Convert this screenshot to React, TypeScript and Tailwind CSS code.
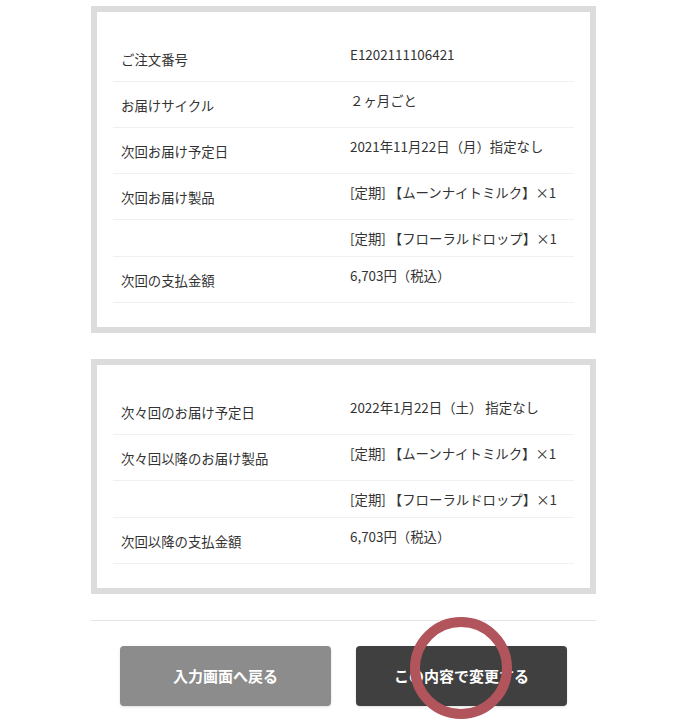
const font = { fontFamily: '"Noto Sans CJK JP", "Noto Sans", sans-serif' };

type Row = { label: string; value: string };

const current: Row[] = [
  { label: "ご注文番号", value: "E1202111106421" },
  { label: "お届けサイクル", value: "２ヶ月ごと" },
  { label: "次回お届け予定日", value: "2021年11月22日（月）指定なし" },
  { label: "次回お届け製品", value: "[定期] 【ムーンナイトミルク】×1" },
  { label: "", value: "[定期] 【フローラルドロップ】×1" },
  { label: "次回の支払金額", value: "6,703円（税込）" },
];

const following: Row[] = [
  { label: "次々回のお届け予定日", value: "2022年1月22日（土） 指定なし" },
  { label: "次々回以降のお届け製品", value: "[定期] 【ムーンナイトミルク】×1" },
  { label: "", value: "[定期] 【フローラルドロップ】×1" },
  { label: "次回以降の支払金額", value: "6,703円（税込）" },
];

function InfoBox({ rows }: { rows: Row[] }) {
  return (
    <div className="border-[6px] border-[#dcdcdc] bg-white px-[16px] py-[24px]">
      {rows.map((row, i) => (
        <div key={i} className="flex items-start border-b border-[#f0f0f0]">
          <div className="w-[237px] shrink-0 pl-2 pt-[15px] pb-[14px] text-[13.4px] leading-4 text-[#333]">
            {row.label}
          </div>
          <div className="pt-[10px] pb-[9px] text-[13.4px] leading-[17px] text-[#333]">
            {row.value}
          </div>
        </div>
      ))}
    </div>
  );
}

export default function App() {
  return (
    <div className="min-h-screen bg-white pt-[6px]" style={font}>
      <div className="ml-[91px] w-[505px]">
        <InfoBox rows={current} />
        <div className="mt-[26px]">
          <InfoBox rows={following} />
        </div>

        <div className="mt-[26px] border-t border-[#e5e5e5] pt-[25px]">
          <div className="relative flex justify-center gap-[25px]">
            <button className="h-[60px] w-[211px] rounded bg-[#8c8c8c] text-[15px] font-bold text-white shadow-sm">
              入力画面へ戻る
            </button>
            <button className="h-[60px] w-[211px] rounded bg-[#404040] text-[15px] font-bold text-white shadow-sm">
              この内容で変更する
            </button>
            {/* annotation ring */}
            <div className="pointer-events-none absolute left-[319px] top-[-29px] h-[102px] w-[102px] rounded-full border-[10px] border-[#b1545b]" />
          </div>
        </div>
      </div>
    </div>
  );
}
